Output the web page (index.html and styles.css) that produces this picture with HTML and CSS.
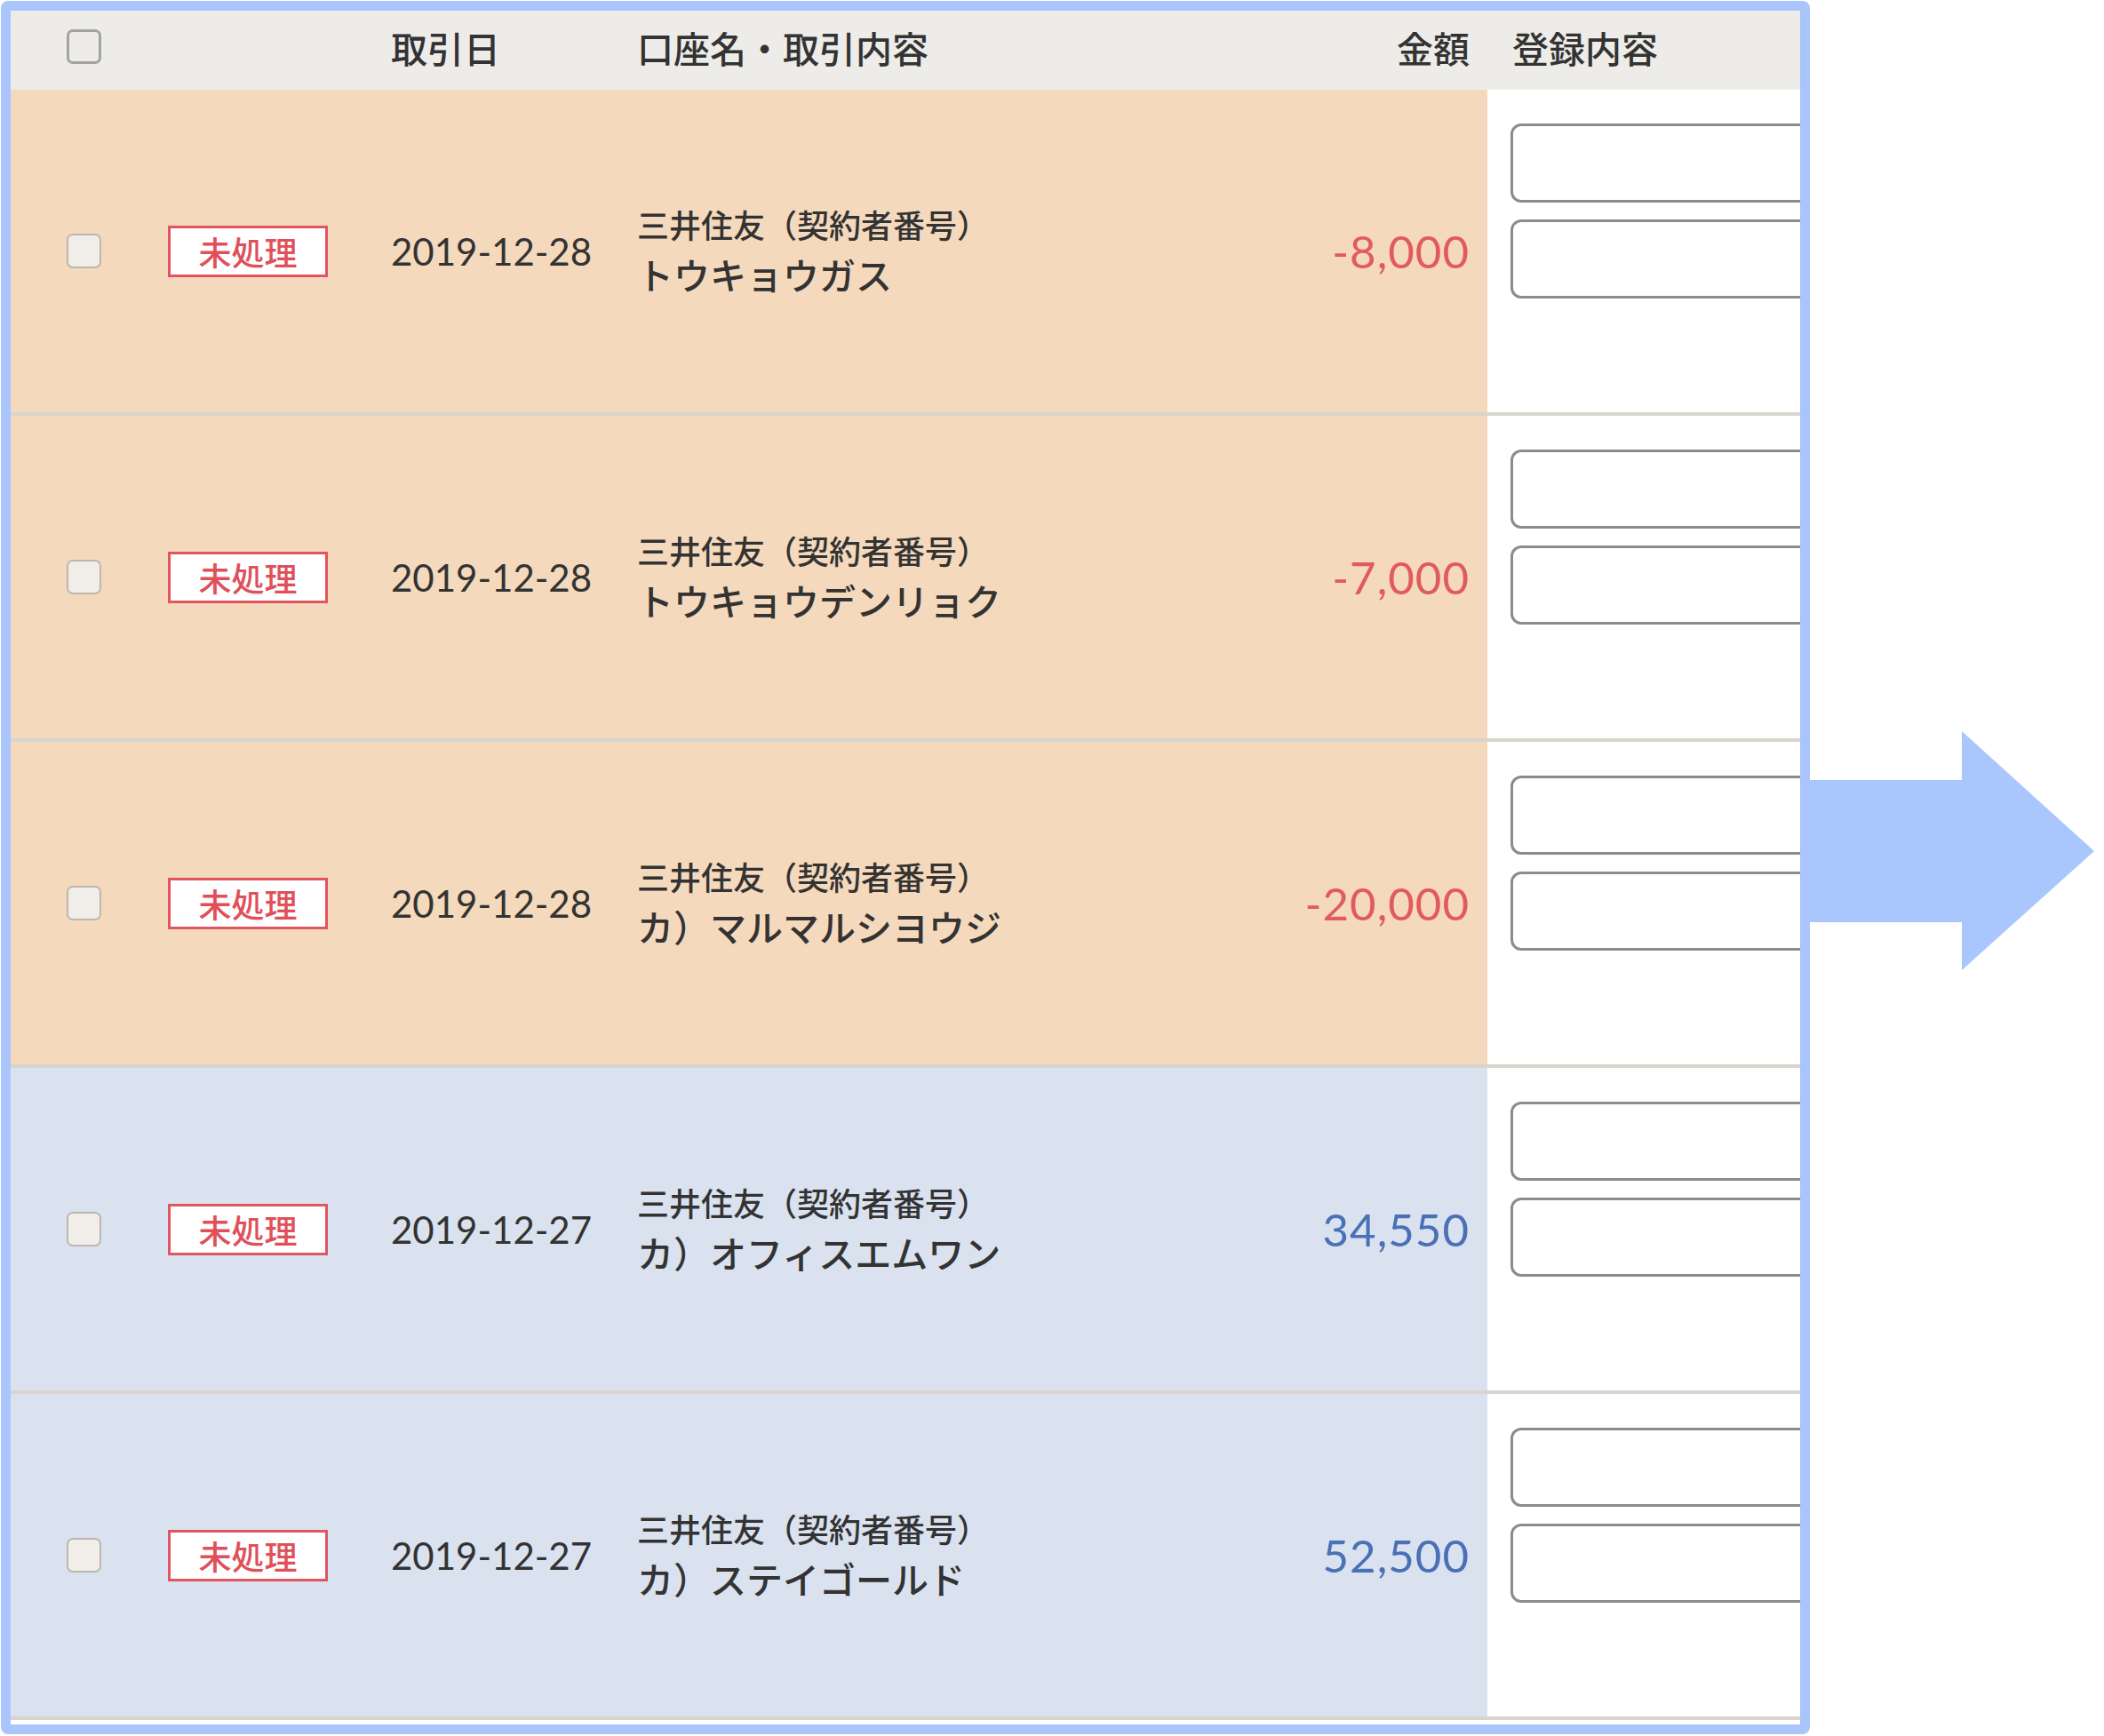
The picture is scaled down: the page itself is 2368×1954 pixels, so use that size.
FILE: index.html
```html
<!DOCTYPE html>
<html lang="ja">
<head>
  <meta charset="UTF-8" />
  <meta name="viewport" content="width=device-width, initial-scale=1.0"/>
  <title>明細一覧</title>
  <link rel="stylesheet" href="styles.css">
</head>
<body>
  <div class="page">
    <div class="frame">
      <div class="row head">
        <div class="cell check"><span class="box"></span></div>
        <div class="cell"></div>
        <div class="cell">取引日</div>
        <div class="cell">口座名・取引内容</div>
        <div class="cell amount">金額</div>
        <div class="cell reg-title">登録内容</div>
      </div>

      <div class="row out">
        <div class="cell check"><span class="box"></span></div>
        <div class="cell"><span class="badge">未処理</span></div>
        <div class="cell date">2019-12-28</div>
        <div class="cell name">
          <div class="bank">三井住友（契約者番号）</div>
          <div class="desc">トウキョウガス</div>
        </div>
        <div class="cell amount minus">-8,000</div>
        <div class="cell reg"><input type="text"><input type="text"></div>
      </div>

      <div class="row out">
        <div class="cell check"><span class="box"></span></div>
        <div class="cell"><span class="badge">未処理</span></div>
        <div class="cell date">2019-12-28</div>
        <div class="cell name">
          <div class="bank">三井住友（契約者番号）</div>
          <div class="desc">トウキョウデンリョク</div>
        </div>
        <div class="cell amount minus">-7,000</div>
        <div class="cell reg"><input type="text"><input type="text"></div>
      </div>

      <div class="row out">
        <div class="cell check"><span class="box"></span></div>
        <div class="cell"><span class="badge">未処理</span></div>
        <div class="cell date">2019-12-28</div>
        <div class="cell name">
          <div class="bank">三井住友（契約者番号）</div>
          <div class="desc">カ）マルマルシヨウジ</div>
        </div>
        <div class="cell amount minus">-20,000</div>
        <div class="cell reg"><input type="text"><input type="text"></div>
      </div>

      <div class="row in">
        <div class="cell check"><span class="box"></span></div>
        <div class="cell"><span class="badge">未処理</span></div>
        <div class="cell date">2019-12-27</div>
        <div class="cell name">
          <div class="bank">三井住友（契約者番号）</div>
          <div class="desc">カ）オフィスエムワン</div>
        </div>
        <div class="cell amount plus">34,550</div>
        <div class="cell reg"><input type="text"><input type="text"></div>
      </div>

      <div class="row in">
        <div class="cell check"><span class="box"></span></div>
        <div class="cell"><span class="badge">未処理</span></div>
        <div class="cell date">2019-12-27</div>
        <div class="cell name">
          <div class="bank">三井住友（契約者番号）</div>
          <div class="desc">カ）ステイゴールド</div>
        </div>
        <div class="cell amount plus">52,500</div>
        <div class="cell reg"><input type="text"><input type="text"></div>
      </div>
    </div>

    <svg class="arrow" width="320" height="269" viewBox="0 0 320 269">
      <path d="M0 55 H171 V0 L320 135 L171 269 V215 H0 Z" fill="#aac7fd"/>
    </svg>
  </div>
</body>
</html>
```

FILE: styles.css
```css
body {
  margin: 0;
  background: #fff;
  font-family: 'Noto Sans CJK JP', sans-serif;
  color: #333;
}

.page {
  display: flex;
  align-items: flex-start;
  padding: 1px;
}

.frame {
  width: 2036px;
  height: 1951px;
  box-sizing: border-box;
  border: 11px solid #a9c5fc;
  border-radius: 8px;
  background: #fff;
  overflow: hidden;
}

.arrow {
  margin-top: 822px;
  flex-shrink: 0;
}

.row {
  display: grid;
  grid-template-columns: 177px 251px 277px 1fr 273px 352px;
  height: 367px;
  box-sizing: border-box;
  border-bottom: 4px solid #d9d5cd;
}

.cell {
  display: flex;
  align-items: center;
}

.row.head {
  height: 89px;
  border-bottom: none;
  background: #edece8;
  font-size: 41px;
  font-weight: 500;
  color: #333;
}

.head .cell {
  padding-bottom: 8px;
}

.row.out { background: #f5d9bc; }
.row.in { background: #dae2ef; }

.check {
  padding-left: 63px;
}

.box {
  width: 39px;
  height: 39px;
  box-sizing: border-box;
  border: 2px solid #bdb6ae;
  border-radius: 7px;
  background: #f1ede9;
}

.head .box {
  border: 3px solid #a3a3a3;
  background: transparent;
}

.badge {
  width: 180px;
  height: 58px;
  box-sizing: border-box;
  border: 3px solid #e2545e;
  background: #fff;
  color: #e0505a;
  font-size: 37px;
  font-weight: 500;
  display: flex;
  align-items: center;
  justify-content: center;
}

.date {
  font-family: 'Lato', sans-serif;
  font-size: 42px;
  color: #333;
}

.name {
  flex-direction: column;
  align-items: flex-start;
  justify-content: center;
  font-weight: 500;
}

.bank {
  font-size: 36px;
  line-height: 50px;
}

.desc {
  font-size: 41px;
  line-height: 62px;
}

.amount {
  justify-content: flex-end;
  padding-right: 20px;
  font-family: 'Lato', sans-serif;
  font-size: 51px;
  letter-spacing: 1px;
}

.head .amount {
  font-family: 'Noto Sans CJK JP', sans-serif;
  font-size: 41px;
  letter-spacing: 0;
}

.minus { color: #e15b5e; }
.plus { color: #4a70b6; }

.reg-title {
  background: #edece8;
  padding-left: 28px;
}

.reg {
  background: #fff;
  flex-direction: column;
  align-items: flex-start;
  justify-content: flex-start;
  padding: 38px 0 0 26px;
  gap: 19px;
  overflow: hidden;
}

.reg input {
  width: 380px;
  height: 89px;
  box-sizing: border-box;
  border: 3px solid #8c8c8c;
  border-radius: 12px;
  background: #fff;
  flex-shrink: 0;
}
```
